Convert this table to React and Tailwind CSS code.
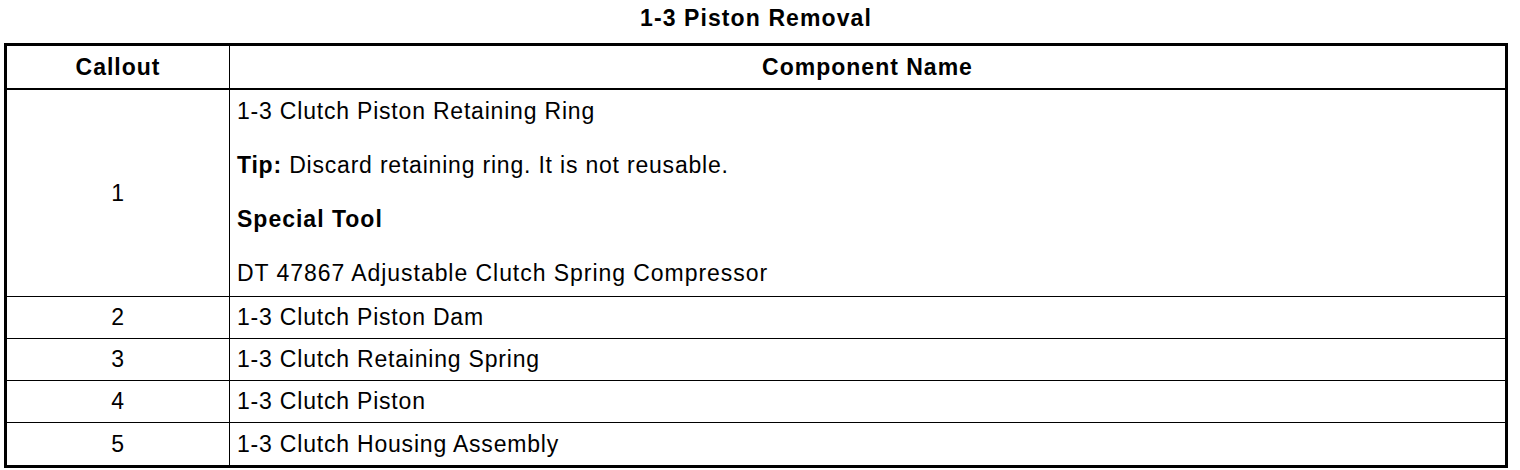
import React from 'react';

const rows = [
  { callout: '2', name: '1-3 Clutch Piston Dam' },
  { callout: '3', name: '1-3 Clutch Retaining Spring' },
  { callout: '4', name: '1-3 Clutch Piston' },
  { callout: '5', name: '1-3 Clutch Housing Assembly' },
];

const App = () => {
  return (
    <div className="w-[1520px] h-[470px] bg-white text-black font-['Liberation_Sans',Arial,sans-serif] text-[23px] tracking-[0.8px]">
      <div className="w-[1504px] ml-[4px] h-[43px] flex items-center justify-center pb-[6px]">
        <h1 className="font-bold text-[23px] tracking-[1.1px]">1-3 Piston Removal</h1>
      </div>
      <div className="w-[1504px] ml-[4px] border-[3px] border-black">
        <div className="flex h-[44px] border-b-2 border-black font-bold tracking-[1px]">
          <div className="w-[223px] border-r border-black flex items-center justify-center">Callout</div>
          <div className="flex-1 flex items-center justify-center">Component Name</div>
        </div>
        <div className="flex h-[207px] border-b border-black">
          <div className="w-[223px] border-r border-black flex items-center justify-center">1</div>
          <div className="flex-1 pl-[7px] pt-[9px] flex flex-col gap-[30px] leading-[24px]">
            <p>1-3 Clutch Piston Retaining Ring</p>
            <p><span className="font-bold">Tip:</span> Discard retaining ring. It is not reusable.</p>
            <p className="font-bold tracking-[1px]">Special Tool</p>
            <p className="tracking-[0.95px]">DT 47867 Adjustable Clutch Spring Compressor</p>
          </div>
        </div>
        {rows.map((row, i) => (
          <div key={row.callout} className={`flex h-[42px] ${i < rows.length - 1 ? 'border-b border-black' : ''}`}>
            <div className="w-[223px] border-r border-black flex items-center justify-center">{row.callout}</div>
            <div className="flex-1 pl-[7px] flex items-center">{row.name}</div>
          </div>
        ))}
      </div>
    </div>
  );
};

export default App;
